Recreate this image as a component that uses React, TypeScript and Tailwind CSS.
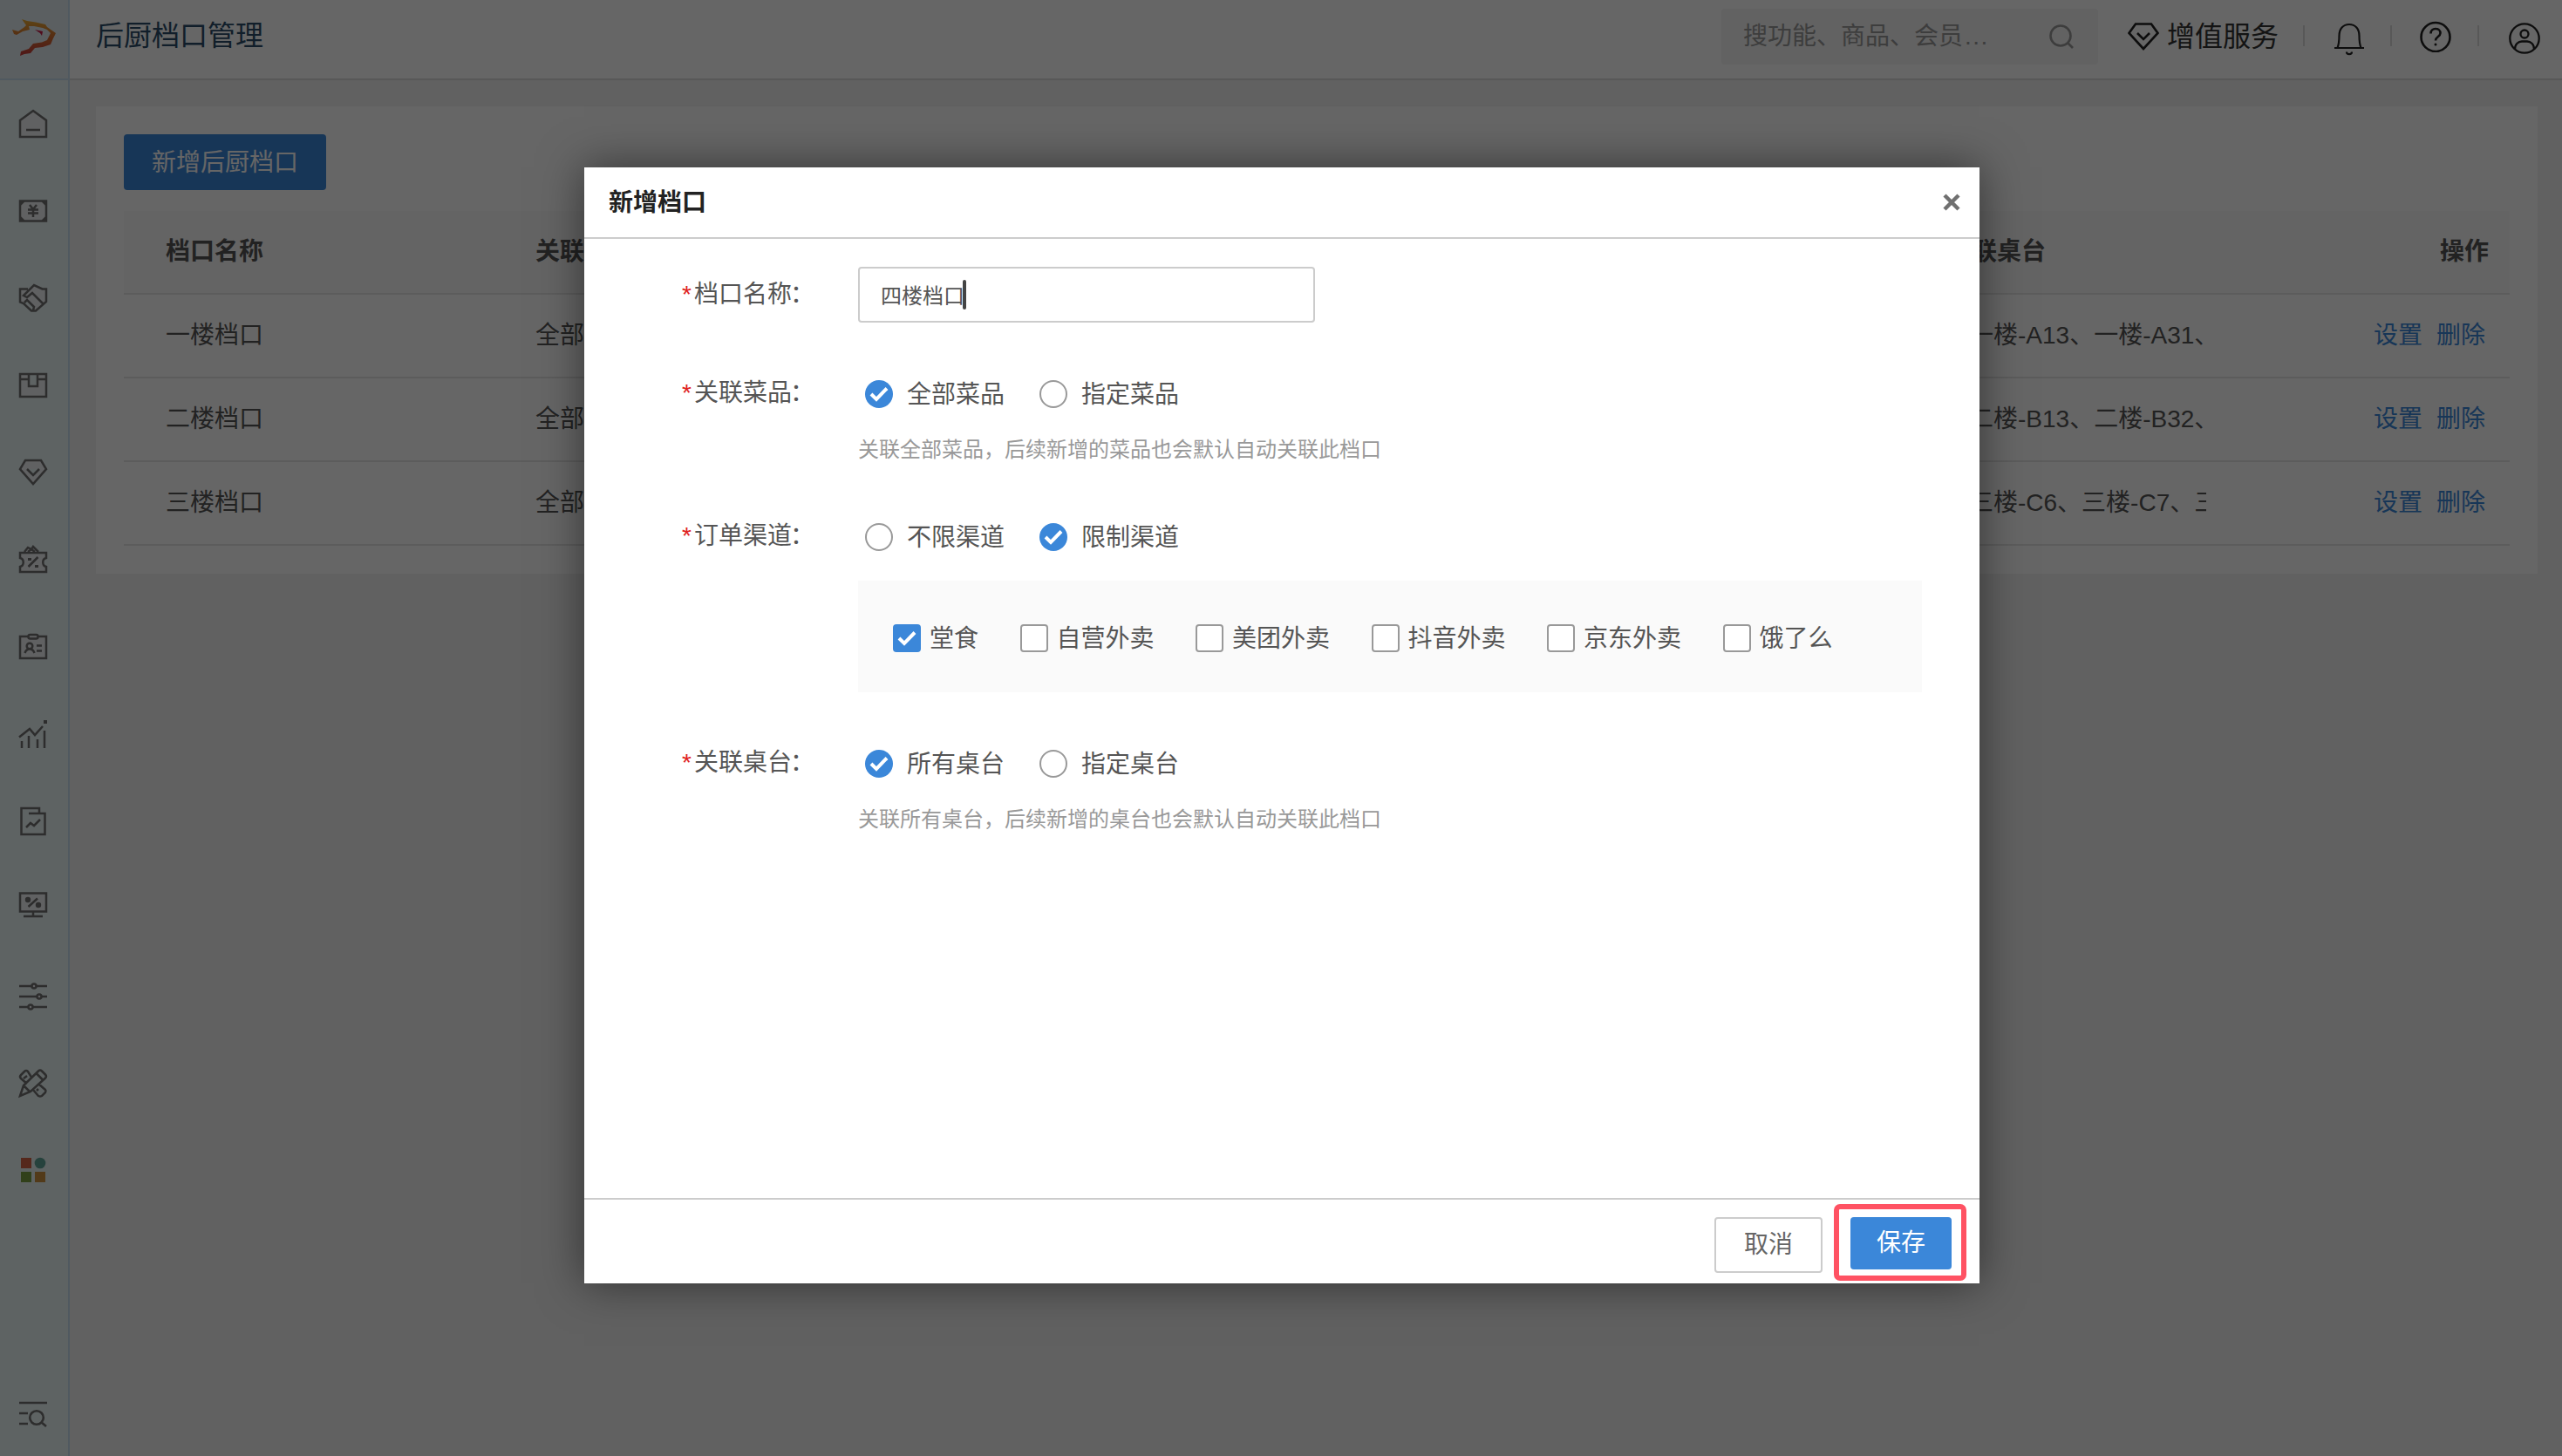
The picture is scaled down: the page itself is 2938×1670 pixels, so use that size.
import { ReactNode } from "react";

type Stall = {
  name: string
  dishes: string
  tables: string
};

const stalls: Stall[] = [
  {name: '一楼档口', dishes: '全部菜品', tables: '一楼-A13、一楼-A31、'},
  {name: '二楼档口', dishes: '全部菜品', tables: '二楼-B13、二楼-B32、'},
  {name: '三楼档口', dishes: '全部菜品', tables: '三楼-C6、三楼-C7、三'},
]

const channels = ['堂食', '自营外卖', '美团外卖', '抖音外卖', '京东外卖', '饿了么']

const menuIcons: ReactNode[] = [
  // home
  <path d="M1 12L16 1l15 11v19H1zM8 23h16"/>,
  // cash
  <><path d="M1 4.5h30v23H1zM1 9l4.500-4.500M31 9l-4.500-4.500M1 23l4.500 4.500M31 23l-4.500 4.500"/><path d="M12 9l4 5 4-5M10 14.500h12M10 18.500h12M16 14v9"/></>,
  // handshake
  <path d="M10 5.500H1v15l4 1.500 9 8.500h5l12-10.500V5.500h-4.500L17 1 5 13l4 2 6-5 13 13M6 21l3-3 8 8-1 4"/>,
  // box
  <path d="M1 3h30v26H1zM1 9h10M21 9h10M11 3v14h10V3"/>,
  // diamond
  <path d="M7 2h18l6 10-15 17L1 12zM9 12l7 7 7-7"/>,
  // coupon
  <><path d="M1 8h30v6c-5 1-5 9 0 10v6H1v-6c5-1 5-9 0-10z"/><path d="M6 7l4-5 4 2 2-3 6 6M10 7l4-3 4 3M10.500 24l11-11"/><path d="M10 14h4v3h-4zM18 22h4v3h-4z" fill="currentColor" stroke="none"/></>,
  // member card
  <><path d="M1 4h30v25H1z"/><rect x="10.500" y="2" width="11" height="4.500" rx="2"/><circle cx="12" cy="15" r="3.300"/><path d="M6.500 23c1-3 3-4.500 5.500-4.500s4.500 1.500 5.500 4.500M20 14.500h6M20 20.500h6"/></>,
  // statistics
  <><path fill="none" d="M0 19.500L12 10l6 7 9-10M3 24v8M11 18v14M21 22v10M29 12v20"/><path d="M28 0h4v4h-4z" fill="currentColor" stroke="none"/></>,
  // report
  <path fill="none" d="M11 7h18.500v24h-27V1H23v6M8 23l5-5 4 3 7-7"/>,
  // discount screen
  <><path d="M1-1.500h30v21H1zM16 20v5M5 25h22M10.500 14L21 4.500"/><circle cx="10" cy="6" r="3.200" fill="currentColor" stroke="none"/><circle cx="22" cy="12" r="3.200" fill="currentColor" stroke="none"/></>,
  // sliders
  <><path d="M0 5h14M20 5h12M0 17h20M26 17h6M0 29h10M16 29h16"/><circle cx="17" cy="5" r="2.500"/><circle cx="23" cy="17" r="2.500"/><circle cx="13" cy="29" r="2.500"/></>,
  // tools
  <path fill="none" d="M1 31l4-12L22 2.500q2-2 4 0l4 4q2 2 0 4L13 26zM19.500 5l8 8M5 19l7.500 7.500M15 11L10 3q-2-2-4 0L2 7q-2 2 0 4l7 6M5 11l4-3M22 17l8 7q1 1 0 3l-4 4q-2 1-4 0l-6-7M20 25l2-2"/>,
]

const Logo = () => (
  <svg className="ml-3.5 mt-[22px] h-[42px] w-[50px]" viewBox="0 0 50 42" fill="none">
    <defs>
      <linearGradient id="beast" x1="0" y1="0" x2="0" y2="42" gradientUnits="userSpaceOnUse">
        <stop offset="0" stopColor="#e9ad35"/>
        <stop offset=".4" stopColor="#d87a30"/>
        <stop offset="1" stopColor="#c63a3c"/>
      </linearGradient>
    </defs>
    <path fill="url(#beast)" d="M11 0L17 2 27 3.500 38 6 40 9 50 16 47 22 44 29 35 32 26 33 21 39 14 40 9 42 10 37 19 34 24 28 34 26.500 40 24 44 16 40 12 35 10 25 8 19 8 20 12 12 14 5 18 2 17 0 12 7 14 14 9 16 7z"/>
    <path fill="#c81c48" d="M26 12l9 2-1 5-2-3z"/>
  </svg>
)

const Check = () => (
  <svg className="size-8" viewBox="0 0 32 32" fill="none" stroke="white" strokeWidth="4">
    <path d="M7 16l6 6L25 9.500"/>
  </svg>
)

const Radio = ({label, checked}: {label: string, checked?: boolean}) => (
  <div className="flex h-8 items-center gap-4">
    {checked
      ? <div className="size-8 rounded-full bg-[#3b87d9]"><Check/></div>
      : <div className="size-8 rounded-full border-2 border-[#999] bg-white"/>}
    <span className="pt-0.5">{label}</span>
  </div>
)

const Checkbox = ({label, checked}: {label: string, checked?: boolean}) => (
  <div className="flex h-8 items-center gap-2.5">
    {checked
      ? <div className="size-8 rounded bg-[#3b87d9]"><Check/></div>
      : <div className="size-8 rounded border-2 border-[#999] bg-white"/>}
    <span className="pt-0.5">{label}</span>
  </div>
)

const FieldLabel = ({label}: {label: string}) => (
  <>
    <span className="w-3.5 text-[#e02020]">*</span>
    <span>{label}<span className="-ml-0.5">：</span></span>
  </>
)

const Field = ({label, children}: {label: string, children: ReactNode}) => (
  <div className="flex">
    <div className="flex h-[30px] w-[202px] shrink-0 items-center">
      <FieldLabel label={label}/>
    </div>
    <div className="flex-1">{children}</div>
  </div>
)

const Sidebar = () => (
  <aside className="flex w-20 shrink-0 flex-col border-r-2 border-[#c8def0] bg-[#ecf7f8]">
    <div className="h-[92px] border-b-2 border-[#c8def0] bg-[#e4edf3]"><Logo/></div>
    <div className="flex flex-1 flex-col gap-[68px] pl-[22px] pt-[34px] text-[#707070]">
      {menuIcons.map((icon, i) => (
        <svg key={i} className="size-8 overflow-visible" viewBox="0 0 32 32" fill="#f0f2f5" stroke="currentColor" strokeWidth="2.500">{icon}</svg>
      ))}
      <svg className="size-8" viewBox="0 0 32 32">
        <path d="M2 2h12v12H2z" fill="#d56447"/>
        <circle cx="24" cy="8" r="6.300" fill="#5fa698"/>
        <path d="M2 18h12v12H2z" fill="#7ca043"/>
        <path d="M18 18h12v12H18z" fill="#cd9240"/>
      </svg>
    </div>
    <svg className="mb-8 ml-[22px] size-8 text-[#707070]" viewBox="0 0 32 32" fill="none" stroke="currentColor" strokeWidth="2.600">
      <path d="M0 3h32M0 15h10M0 27h10M25 25l6 5"/>
      <circle cx="20" cy="20" r="7.800"/>
    </svg>
  </aside>
)

const Header = () => (
  <header className="flex h-[92px] shrink-0 items-start border-b-2 border-[#dcdcdc] bg-white pl-[30px]">
    <h1 className="mt-[17px] text-[32px] leading-[48px] text-[#2c4d69]">后厨档口管理</h1>
    <div className="ml-auto mt-2.5 flex h-16 w-[432px] items-center justify-between rounded bg-[#f4f4f4] pl-[25px] pr-7 text-[28px] text-[#999]">
      <span>搜功能、商品、会员<span className="ml-0.5 tracking-[1.5px]">...</span></span>
      <svg className="size-7" viewBox="0 0 28 28" fill="none" stroke="#999" strokeWidth="2.600">
        <circle cx="13" cy="13" r="11.500"/>
        <path d="M21 21l6 6"/>
      </svg>
    </div>
    <div className="ml-[34px] mt-[18px] flex h-12 w-[201px] items-center gap-[9px] text-[32px] text-[#333]">
      <svg className="h-8 w-9" viewBox="0 0 36 32" fill="none" stroke="#222" strokeWidth="2.600">
        <path d="M9 1.500h18l7.500 10.500L18 30 1.500 12zM11 12l7 7 7-7"/>
      </svg>
      <span>增值服务</span>
    </div>
    <div className="mt-[29px] h-6 w-0.5 bg-[#dcdcdc]"/>
    <svg className="ml-[34px] mt-[26px] h-[38px] w-[34px]" viewBox="0 0 34 38" fill="none" stroke="#222" strokeWidth="2.200">
      <path d="M0 29h34M3.500 29C5 25 5.500 21 5.500 15 5.500 7 10 2 17 2s11.500 5 11.500 13c0 6 .5 10 2 14M14 33.500c0 3.500 6 3.500 6 0"/>
    </svg>
    <div className="ml-[30px] mt-[29px] h-6 w-0.5 bg-[#dcdcdc]"/>
    <svg className="ml-8 mt-6 size-9" viewBox="0 0 36 36" fill="none" stroke="#222" strokeWidth="2.600">
      <circle cx="18" cy="18.500" r="16.500"/>
      <path d="M12.500 14.500c0-3.500 2.300-5.500 5.500-5.500s5.500 2 5.500 5c0 4-5.500 4-5.500 8.500"/>
      <circle cx="18" cy="27" r="1.500" fill="#222" stroke="none"/>
    </svg>
    <div className="ml-[30px] mt-[29px] h-6 w-0.5 bg-[#dcdcdc]"/>
    <svg className="ml-[34px] mr-[25px] mt-[26px] size-9" viewBox="0 0 36 36" fill="none" stroke="#222" strokeWidth="2.300">
      <circle cx="18" cy="18" r="16.700"/>
      <circle cx="18" cy="13" r="4.500"/>
      <path d="M7 30.500c0-6 4-9 8-9h6c4 0 8 3 8 9"/>
    </svg>
  </header>
)

const StallTable = () => (
  <div className="mt-6 text-[28px] text-[#555]">
    <div className="grid h-24 grid-cols-[472px_1620px_1fr] items-center border-b-2 border-[#e6e6e6] bg-[#fafafa] font-bold">
      <span className="pl-12">档口名称</span>
      <span>关联菜品</span>
      <div className="flex justify-between pr-6">
        <span>关联桌台</span>
        <span>操作</span>
      </div>
    </div>
    {stalls.map(s => (
      <div key={s.name} className="grid h-24 grid-cols-[472px_1644px_272px_1fr] items-center border-b-2 border-[#e6e6e6]">
        <span className="pl-12">{s.name}</span>
        <span>{s.dishes}</span>
        <span className="overflow-hidden whitespace-nowrap">{s.tables}</span>
        <div className="flex justify-end gap-4 pr-7 text-[#3b87d9]">
          <span>设置</span>
          <span>删除</span>
        </div>
      </div>
    ))}
  </div>
)

const StallDialog = () => (
  <div className="flex h-[1280px] w-[1600px] flex-col bg-white text-[28px] text-[#555] shadow-[0_0_48px_rgba(0,0,0,0.5)]">
    <div className="flex h-[82px] items-center justify-between border-b-2 border-[#ccc] pl-7 pr-[22px]">
      <span className="pt-0.5 font-bold text-[#222]">新增档口</span>
      <svg className="size-5" viewBox="0 0 20 20" fill="none" stroke="#707070" strokeWidth="4.500">
        <path d="M2 2l16 16M18 2L2 18"/>
      </svg>
    </div>
    <div className="flex-1 pl-28 pr-[66px] pt-8">
      <div className="flex">
        <div className="flex h-16 w-[202px] items-center">
          <FieldLabel label="档口名称"/>
        </div>
        <div className="flex h-16 w-[524px] items-center rounded border-2 border-[#ccc] pl-6 text-2xl">
          <span className="pt-1">四楼档口</span>
          <span className="-ml-0.5 h-[34px] w-1 rounded-sm bg-[#444]"/>
        </div>
      </div>
      <div className="mt-[66px]">
        <Field label="关联菜品">
          <div className="flex gap-10 pl-2">
            <Radio label="全部菜品" checked/>
            <Radio label="指定菜品"/>
          </div>
          <p className="mt-[30px] text-2xl leading-9 text-[#999]">关联全部菜品，后续新增的菜品也会默认自动关联此档口</p>
        </Field>
      </div>
      <div className="mt-[66px]">
        <Field label="订单渠道">
          <div className="flex gap-10 pl-2">
            <Radio label="不限渠道"/>
            <Radio label="限制渠道" checked/>
          </div>
          <div className="mt-[34px] flex h-32 items-center gap-[47.5px] bg-[#fafafa] pl-10 pt-1">
            {channels.map(c => <Checkbox key={c} label={c} checked={c === '堂食'}/>)}
          </div>
        </Field>
      </div>
      <div className="mt-[66px]">
        <Field label="关联桌台">
          <div className="flex gap-10 pl-2">
            <Radio label="所有桌台" checked/>
            <Radio label="指定桌台"/>
          </div>
          <p className="mt-[30px] text-2xl leading-9 text-[#999]">关联所有桌台，后续新增的桌台也会默认自动关联此档口</p>
        </Field>
      </div>
    </div>
    <div className="flex h-[98px] items-start justify-end border-t-2 border-[#ccc] pr-[15px]">
      <button className="mt-5 h-16 w-[124px] rounded border-2 border-[#ccc] text-[#666]">取消</button>
      <div className="ml-[13px] mt-[5px] h-[88px] w-[152px] rounded-[7px] border-6 border-[#ff5263] pl-[13px] pt-[9px]">
        <button className="h-[60px] w-[116px] rounded bg-[#3b87d9] text-white">保存</button>
      </div>
    </div>
  </div>
)

const App = () => {
  return (
    <div className="relative flex h-[1670px] w-[2938px] overflow-hidden bg-[#f2f2f2] font-['Liberation_Sans','Noto_Sans_CJK_SC',sans-serif]">
      <Sidebar/>
      <div className="flex flex-1 flex-col">
        <Header/>
        <main className="ml-[30px] mr-7 mt-[30px] h-[536px] bg-white p-8">
          <button className="block h-16 w-[232px] rounded bg-[#3b87d9] pt-0.5 text-[28px] text-white">新增后厨档口</button>
          <StallTable/>
        </main>
      </div>
      <div className="absolute inset-0 flex justify-center bg-black/60 pl-0.5 pt-48">
        <StallDialog/>
      </div>
    </div>
  )
}

export default App
